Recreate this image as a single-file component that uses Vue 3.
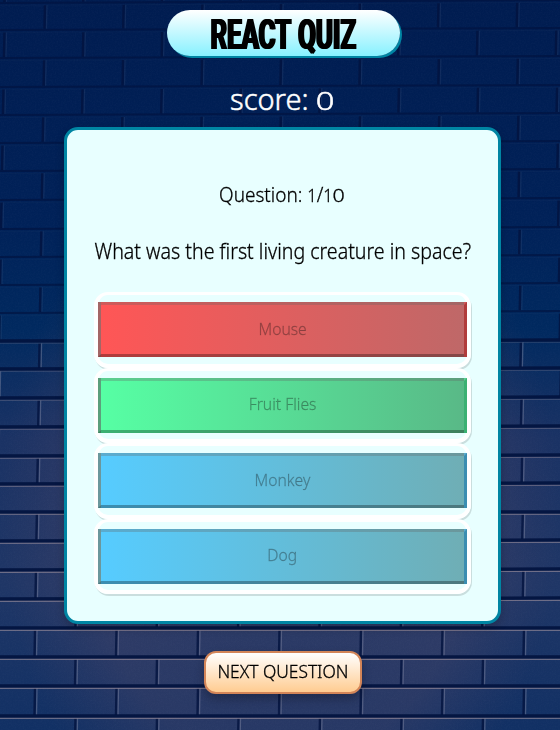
<script setup>
const answers = [
  { text: 'Mouse', tone: 'wrong' },
  { text: 'Fruit Flies', tone: 'right' },
  { text: 'Monkey', tone: 'plain' },
  { text: 'Dog', tone: 'plain' }
]

// mortar lines: height at the left and right side of the wall
const left = [-25, 3, 30, 58, 87, 115, 143, 171, 200, 229, 257, 285, 313, 341, 369, 398, 427, 456, 484, 512, 541, 570, 599, 628, 657, 686, 716, 745]
const right = [-29, 0, 28, 56, 85, 113, 141, 169, 198, 227, 255, 283, 311, 340, 368, 397, 426, 455, 483, 512, 540, 569, 598, 628, 657, 686, 716, 745]

const rows = left.map((l, i) => ({ l, r: right[i], light: l < 330 ? 0.03 : Math.min(0.55, 0.15 + (l - 330) / 600) }))
const joints = []
for (let i = 0; i < left.length - 1; i++) {
  const t = Math.min(1, Math.max(0, left[i] / 630))
  const start = i % 2 === 1 ? 45 - 10 * t : 5 - 11 * t
  const step = 78.7 + 2.8 * t
  for (let k = 0; k < 8; k++) {
    const x = start + step * k
    const f = x / 560
    joints.push({
      x,
      top: left[i] + (right[i] - left[i]) * f + 2.5,
      bottom: left[i + 1] + (right[i + 1] - left[i + 1]) * f - 1,
      light: left[i] < 330 ? 0.11 : 0.42
    })
  }
}
</script>

<template>
  <main class="page">
    <svg class="wall" viewBox="0 0 560 730" aria-hidden="true">
      <defs>
        <linearGradient id="base" x1="0" y1="0" x2="0" y2="1">
          <stop offset="0" stop-color="#001c50" />
          <stop offset=".3" stop-color="#002158" />
          <stop offset=".45" stop-color="#00295f" />
          <stop offset=".6" stop-color="#1a3264" />
          <stop offset=".8" stop-color="#1f3666" />
          <stop offset="1" stop-color="#113064" />
        </linearGradient>
        <radialGradient id="glow" cx=".5" cy=".7" r=".5">
          <stop offset="0" stop-color="#4a4464" stop-opacity=".3" />
          <stop offset=".7" stop-color="#514868" stop-opacity=".36" />
          <stop offset="1" stop-color="#4b4367" stop-opacity="0" />
        </radialGradient>
        <filter id="grain" x="0" y="0" width="100%" height="100%">
          <feTurbulence type="fractalNoise" baseFrequency=".65" numOctaves="2" seed="4" />
          <feColorMatrix values="0 0 0 0 .5  0 0 0 0 .5  0 0 0 0 .65  .5 0 0 0 -.18" />
        </filter>
      </defs>
      <rect width="560" height="730" fill="url(#base)" />
      <rect width="560" height="730" fill="url(#glow)" />
      <rect width="560" height="730" filter="url(#grain)" opacity=".12" />
      <g v-for="(j, i) in joints" :key="'j' + i">
        <path :d="`M${j.x} ${j.top}L${j.x - 0.5} ${j.bottom}`" stroke="#02133f" stroke-opacity=".8" stroke-width="2.4" />
        <path :d="`M${j.x + 2} ${j.top}L${j.x + 1.5} ${j.bottom}`" stroke="#8b90a9" :stroke-opacity="j.light" stroke-width="1.3" />
      </g>
      <g v-for="(r, i) in rows" :key="'r' + i">
        <path :d="`M0 ${r.l}L560 ${r.r}`" stroke="#02133f" :stroke-opacity="r.l < 330 ? 0.65 : 0.92" :stroke-width="r.l < 330 ? 2 : 3.4" />
        <path :d="`M0 ${r.l + 2.4}L560 ${r.r + 2.4}`" stroke="#ad9ba3" :stroke-opacity="r.light" stroke-width="1.2" />
      </g>
    </svg>

    <h1 class="title"><span class="fit title-text">REACT QUIZ</span></h1>
    <p class="score"><span class="fit score-text">score: <span class="zero">0</span></span></p>

    <section class="card">
      <p class="number"><span class="fit number-text">Question: <span class="digit">1</span>/<span class="digit">1</span><span class="zero">0</span></span></p>
      <p class="question"><span class="fit question-text">What was the first living creature in space?</span></p>
      <div class="answers">
        <div v-for="a in answers" :key="a.text" class="answer">
          <button :class="['choice', a.tone]" disabled><span class="fit choice-text">{{ a.text }}</span></button>
        </div>
      </div>
    </section>

    <button class="next"><span class="fit next-text">NEXT QUESTION</span></button>
  </main>
</template>

<style>
body { margin: 0; background: #001c50; }
</style>

<style scoped>
.page {
  position: relative;
  box-sizing: border-box;
  width: 560px;
  height: 730px;
  padding: 10px 0 0 5px;
  overflow: hidden;
  display: flex;
  flex-direction: column;
  align-items: center;
  font-family: "Noto Sans", sans-serif;
  font-weight: 300;
  -webkit-text-stroke: .3px currentColor;
}
.wall { position: absolute; inset: 0; width: 560px; height: 730px; }
.title, .score, .card, .next { position: relative; flex: none; box-sizing: border-box; }
p, h1 { margin: 0; }
.fit { display: inline-block; white-space: nowrap; }
.title {
  margin-left: 1px;
  width: 233px;
  height: 46px;
  display: flex;
  justify-content: center;
  align-items: center;
  border-radius: 24px;
  background: linear-gradient(180deg, #fff, #87f1ff);
  box-shadow: 2px 2px 0 #0085a3;
  color: #000;
  -webkit-text-stroke: 0;
}
.title-text {
  padding-top: 2px;
  font: 700 43px/46px Roboto, sans-serif;
  word-spacing: 2px;
  transform: scaleX(.6);
  text-shadow: 1.8px 0 #000, -1.8px 0 #000;
}
.zero { display: inline-block; font-size: .87em; line-height: 1; transform: scaleX(1.3); margin: 0 .09em; }
.digit { font-size: .87em; }
.score { margin-top: 19px; height: 48px; color: #fff; font-size: 29px; line-height: 48px; -webkit-text-stroke-width: .5px; }
.card {
  margin-top: 4px;
  width: 437px;
  height: 497px;
  border: 3px solid #0085a3;
  border-radius: 14px;
  background: #e8ffff;
  box-shadow: 0 4px 10px rgba(0, 0, 0, .2);
  display: flex;
  flex-direction: column;
  align-items: center;
  color: #000;
}
.number { margin-top: 47px; height: 34px; font-size: 20.5px; line-height: 34px; }
.question { margin-top: 23px; height: 34px; font-size: 21px; line-height: 34px; }
.number-text { transform: scaleX(.925); }
.question-text { transform: scaleX(.933); }
.answers { margin-top: 24px; width: 377.5px; }
.answer {
  box-sizing: border-box;
  height: 75.6px;
  padding: 7px 0;
  border: solid #fff;
  border-width: 3px 4.5px 4px 4px;
  border-radius: 14px;
  box-shadow: 1px 2px 0 rgba(0, 0, 0, .13);
}
.choice {
  display: block;
  box-sizing: border-box;
  width: 100%;
  height: 55px;
  padding: 0 0 2px;
  border: 3px outset rgba(16, 16, 16, .3);
  color: rgba(16, 16, 16, .3);
  font-family: inherit;
  font-weight: inherit;
  font-size: 16px;
}
.choice-text { transform: scaleX(.98); }
.wrong { background: linear-gradient(90deg, #ff5656, #bf6868); }
.right { background: linear-gradient(90deg, #56ffa4, #59b987); }
.plain { background: linear-gradient(90deg, #56ccff, #6faeb5); }
.next {
  margin-top: 27px;
  width: 158px;
  height: 43px;
  padding: 0 0 4px;
  border: 2px solid #d38558;
  border-radius: 12px;
  background: linear-gradient(180deg, #fff, #ffcc91);
  box-shadow: 0 5px 10px rgba(0, 0, 0, .25);
  color: #000;
  font-family: inherit;
  font-weight: inherit;
  font-size: 18px;
  display: flex;
  justify-content: center;
  align-items: center;
}
.next-text { transform: scaleX(.965); }
</style>
